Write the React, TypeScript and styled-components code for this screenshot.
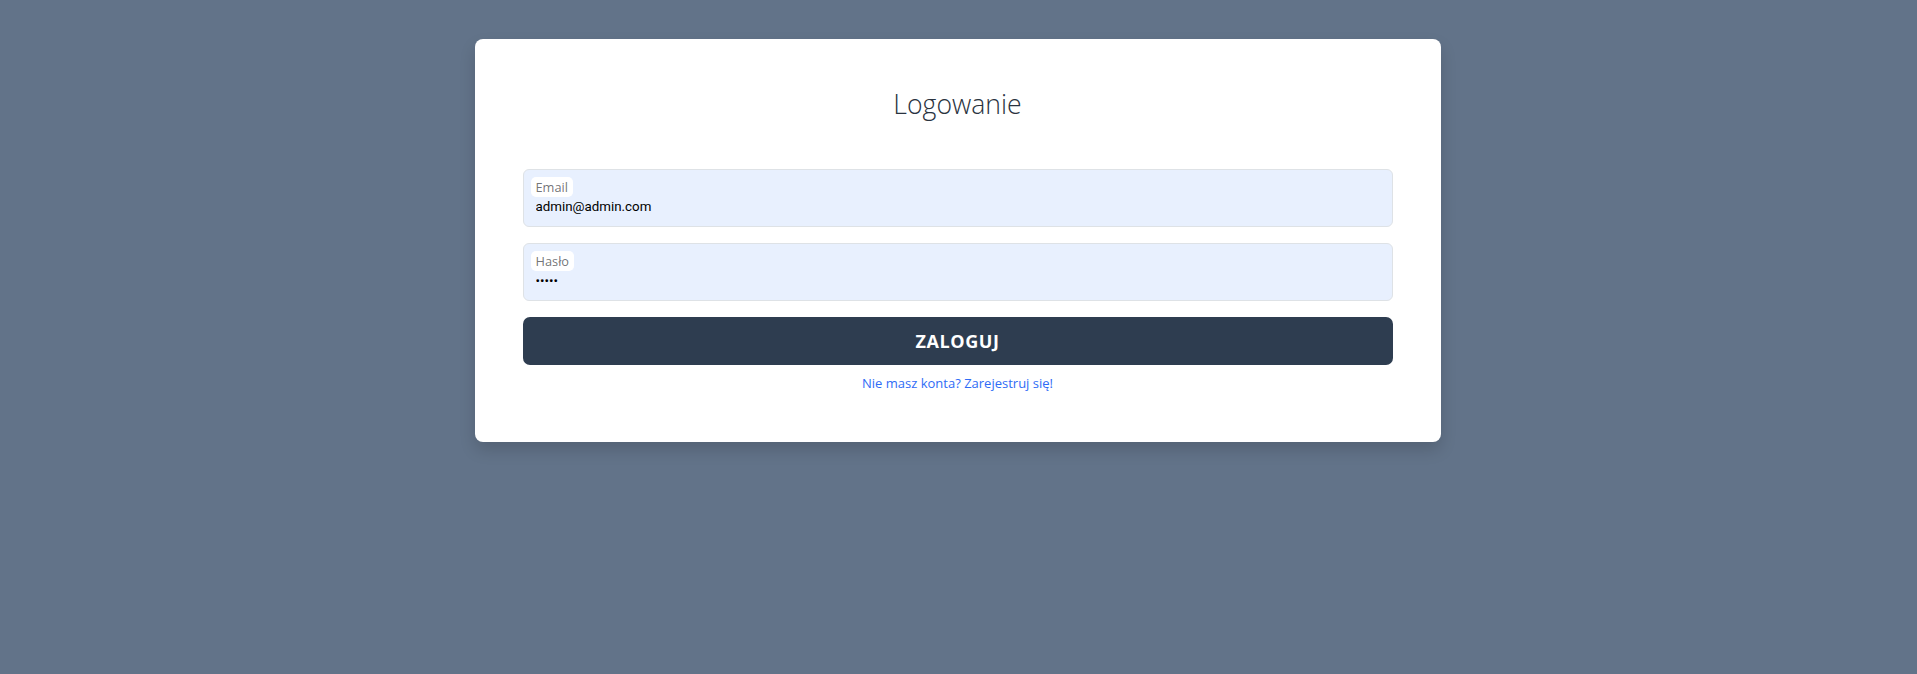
import React from "react";
import styled, { createGlobalStyle } from "styled-components";

const GlobalStyle = createGlobalStyle`
  html, body { margin: 0; padding: 0; }
  body {
    background: #627389;
    font-family: "Open Sans", "Noto Sans", sans-serif;
    color: #212529;
  }
  * { box-sizing: border-box; }
`;

const Page = styled.main`
  min-height: 674px;
  display: flex;
  justify-content: center;
  align-items: flex-start;
  padding: 39px 2px 0 0;
`;

const Card = styled.section`
  width: 966px;
  background: #ffffff;
  border-radius: 8px;
  box-shadow: 0 8px 16px rgba(0, 0, 0, 0.15);
  padding: 48px;
  display: flex;
  flex-direction: column;
`;

const Title = styled.h3`
  margin: 0 0 47px;
  text-align: center;
  font-family: "Open Sans", sans-serif;
  font-weight: 300;
  font-size: 26.6px;
  line-height: 35px;
  color: #2a3340;
`;

const Form = styled.form`
  display: flex;
  flex-direction: column;
  gap: 16px;
`;

const Field = styled.div`
  position: relative;
`;

const Input = styled.input`
  width: 100%;
  height: 58px;
  padding: 27px 12px 10px;
  background: #e8f0fe;
  border: 1px solid #dee2e6;
  border-radius: 6px;
  font-family: Roboto, "Liberation Sans", sans-serif;
  font-size: 13.33px;
  color: #000000;
  outline: none;
`;

const Label = styled.label`
  position: absolute;
  top: 8px;
  left: 8px;
  height: 20px;
  padding: 0 5px;
  background: #ffffff;
  border-radius: 5px;
  font-family: "Open Sans", sans-serif;
  font-size: 12.8px;
  line-height: 20px;
  color: rgba(33, 37, 41, 0.65);
  pointer-events: none;
`;

const SubmitButton = styled.button`
  height: 48px;
  border: none;
  border-radius: 7px;
  background: #2e3d50;
  color: #ffffff;
  font-family: "Open Sans", sans-serif;
  font-weight: 700;
  font-size: 18px;
  letter-spacing: 0.6px;
  cursor: pointer;
`;

const Footer = styled.p`
  margin: 8px 0 0;
  text-align: center;
  font-size: 13px;
  line-height: 21px;
`;

const Link = styled.a`
  color: #2f6cf6;
  text-decoration: none;
`;

export default function App() {
  return (
    <>
      <GlobalStyle />
      <Page>
        <Card>
          <Title>Logowanie</Title>
          <Form onSubmit={(e) => e.preventDefault()}>
            <Field>
              <Input id="email" type="email" defaultValue="admin@admin.com" />
              <Label htmlFor="email">Email</Label>
            </Field>
            <Field>
              <Input id="password" type="password" defaultValue="admin" />
              <Label htmlFor="password">Hasło</Label>
            </Field>
            <SubmitButton type="submit">ZALOGUJ</SubmitButton>
          </Form>
          <Footer>
            <Link href="#">Nie masz konta? Zarejestruj się!</Link>
          </Footer>
        </Card>
      </Page>
    </>
  );
}
